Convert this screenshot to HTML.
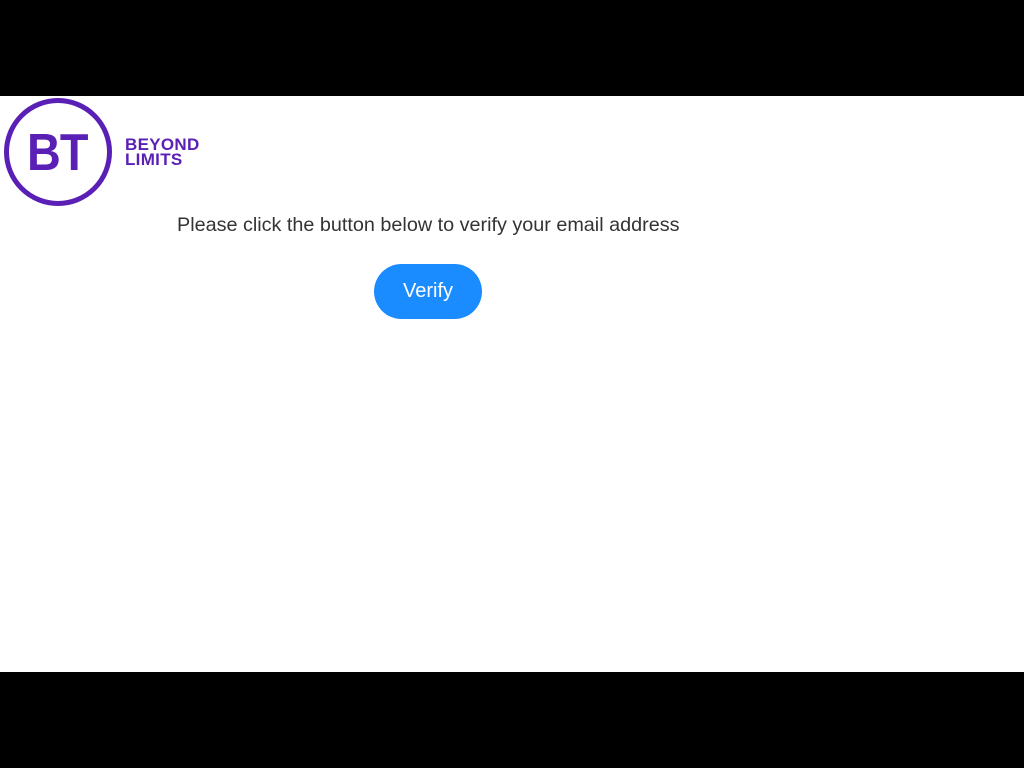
<!DOCTYPE html>
<html><head><style>
body{margin:0;width:1024px;height:768px;background:#000;position:relative;overflow:hidden;font-family:"Liberation Sans",Arial,sans-serif}
.main{position:absolute;left:0;top:96px;width:1024px;height:576px;background:#fff}
.circ{position:absolute;left:4px;top:98px;width:98px;height:98px;border:5px solid #5a1fb5;border-radius:50%}
.bt{position:absolute;left:27px;top:127px;font-weight:bold;font-size:52px;color:#5a1fb5;letter-spacing:-1px;line-height:52px;transform:scaleX(0.9);transform-origin:left top}
.bl{position:absolute;left:125px;top:137px;font-weight:bold;font-size:17px;line-height:15px;color:#5a1fb5;letter-spacing:0.3px}
.txt{position:absolute;left:177px;top:214px;font-size:19.8px;color:#333;white-space:nowrap}
.btn{position:absolute;left:374px;top:264px;width:108px;height:55px;border-radius:28px;background:#1a8cff;color:#fff;font-size:20px;text-align:center;line-height:55px}
</style></head><body>
<div class="main"></div>
<div class="circ"></div>
<div class="bt">BT</div>
<div class="bl">BEYOND<br>LIMITS</div>
<div class="txt">Please click the button below to verify your email address</div>
<div class="btn">Verify</div>
</body></html>
